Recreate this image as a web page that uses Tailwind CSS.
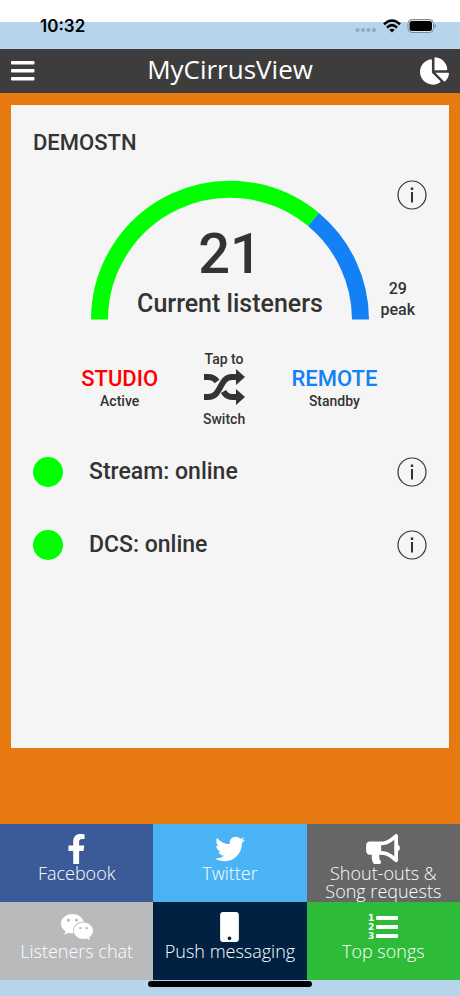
<!DOCTYPE html>
<html lang="en">
<head>
<meta charset="utf-8">
<meta name="viewport" content="width=device-width, initial-scale=1">
<title>MyCirrusView</title>
<script src="https://cdn.jsdelivr.net/npm/@tailwindcss/browser@4"></script>
</head>
<body class="flex min-h-screen flex-col bg-[#b6d4ec] font-['Roboto',sans-serif] text-[#333333]">
  <div class="h-[49px] shrink-0 bg-linear-to-b from-white from-[22px] to-[#b6d4ec] to-[22px]">
    <div class="flex items-center justify-between pt-4 pr-6 pl-10">
      <time class="font-['Inter',sans-serif] text-[17px] leading-5 font-semibold text-black">10:32</time>
      <div class="flex items-center gap-[6px]">
        <svg class="mt-2 h-1 w-[22px]" viewBox="0 0 22 4" fill="#8fa9bf"><circle cx="2.5" cy="2" r="2"/><circle cx="8" cy="2" r="2"/><circle cx="13.500" cy="2" r="2"/><circle cx="19" cy="2" r="2"/></svg>
        <svg class="h-[14px] w-[18px]" viewBox="0 0 18 14" fill="none" stroke="#000" stroke-width="2.600"><path d="M1 5.300Q9-2.300 17 5.300M4 8.600Q9 3.800 14 8.600"/><path d="M6.300 10.800Q9 8.500 11.700 10.800L9 13.500Z" fill="#000" stroke="none"/></svg>
        <svg class="h-[14px] w-[29px]" viewBox="0 0 29 14"><rect x="1" y=".5" width="25.500" height="13" rx="4" fill="#dfe6ec" stroke="#7d8b97"/><rect x="2.500" y="2" width="22.500" height="10" rx="2.500"/><path d="M27.500 5v4q1.500-.5 1.500-2t-1.500-2" fill="#7d8b97"/></svg>
      </div>
    </div>
  </div>

  <header class="flex h-11 shrink-0 items-center justify-between bg-[#3d3d3d] px-[11px] text-white">
    <button type="button" aria-label="Menu" class="w-7">
      <svg class="h-[22px] w-6" viewBox="0 0 24 22" fill="currentColor"><rect y="1" width="23.500" height="3.600" rx="1"/><rect y="9" width="23.500" height="3.600" rx="1"/><rect y="17" width="23.500" height="3.600" rx="1"/></svg>
    </button>
    <h1 class="pb-1 font-['Open_Sans',sans-serif] text-[26px] leading-9 font-normal">MyCirrusView</h1>
    <button type="button" aria-label="Statistics" class="flex w-7 justify-end">
      <svg class="h-7 w-[29px] shrink-0" viewBox="0 0 544 512" fill="currentColor"><path d="M527.79 288H290.5l158.03 158.03c6.04 6.04 15.98 6.53 22.19.68 38.7-36.46 65.32-85.61 73.13-140.86 1.34-9.46-6.51-17.85-16.06-17.85zm-15.83-64.8C503.72 103.74 408.26 8.28 288.8.04 279.68-.59 272 7.1 272 16.24V240h223.77c9.14 0 16.82-7.68 16.19-16.8zM224 288V50.71c0-9.55-8.39-17.4-17.84-16.06C86.99 51.49-4.1 155.6.14 280.37 4.5 408.51 114.83 513.59 243.03 511.98c50.4-.63 96.97-16.87 135.26-44.03 7.9-5.6 8.42-17.23 1.57-24.08L224 288z"/></svg>
    </button>
  </header>

  <main class="flex grow flex-col bg-[#e67a10] px-[11px] pt-3 pb-[76px]">
    <section class="grow bg-[#f5f5f5] px-[22px] pt-[22px]">
      <h2 class="text-[22px] leading-8 font-medium">DEMOSTN</h2>
      <div class="relative mt-[21px]">
        <svg class="mx-auto h-[140px] w-[278px]" viewBox="0 0 278 140" fill="none" stroke-width="17"><path d="M8.500 139.500A130.500 130.500 0 0 1 222.500 39.500" stroke="#00ff00"/><path d="M222.500 39.500A130.500 130.500 0 0 1 269.500 139.500" stroke="#1380f5"/></svg>
        <div class="absolute inset-x-0 top-11 text-center font-medium">
          <p class="text-[56px] leading-[60px]">21</p>
          <p class="text-[25px] leading-10">Current listeners</p>
        </div>
        <p class="absolute right-3 bottom-0 text-center text-[16px] leading-[21px] font-medium">29<br>peak</p>
        <button type="button" aria-label="About listeners" class="absolute top-0 right-0">
          <svg class="size-[30px]" viewBox="0 0 30 30"><circle cx="15" cy="15" r="14" fill="none" stroke="#333" stroke-width="1.200"/><path d="M13.800 7.500h2.400v2.400h-2.400zM14 12h2v10.500h-2z" fill="#333"/></svg>
        </button>
      </div>

      <div class="mt-[29px] grid grid-cols-[44%_9%_47%] items-center text-center font-medium">
        <div>
          <p class="text-[22px] leading-6 text-[#ff0000]">STUDIO</p>
          <p class="text-[14px] leading-5">Active</p>
        </div>
        <button type="button" class="-mx-5 text-[14px] leading-5">
          <span class="block">Tap to</span>
          <svg class="mx-auto h-9 w-[41px]" viewBox="0 0 41 36" fill="none" stroke="#333" stroke-width="6"><path d="M0 28H4C18 28 15 8 28 8H33"/><path d="M0 8H4Q10 8 13 12.500M19.500 22.500Q22.500 28 28 28H33"/><path d="M32 0 41 8 32 16ZM32 20 41 28 32 36Z" fill="#333" stroke="none"/></svg>
          <span class="block pt-1">Switch</span>
        </button>
        <div>
          <p class="text-[22px] leading-6 text-[#1380f5]">REMOTE</p>
          <p class="text-[14px] leading-5">Standby</p>
        </div>
      </div>

      <ul class="mt-7 flex flex-col gap-[43px] text-[23px] leading-[30px] font-medium">
        <li class="flex items-center">
          <span class="size-[30px] rounded-full bg-[#00ff00]"></span>
          <span class="grow pl-[26px]">Stream: online</span>
          <button type="button" aria-label="About stream">
            <svg class="size-[30px]" viewBox="0 0 30 30"><circle cx="15" cy="15" r="14" fill="none" stroke="#333" stroke-width="1.200"/><path d="M13.800 7.500h2.400v2.400h-2.400zM14 12h2v10.500h-2z" fill="#333"/></svg>
          </button>
        </li>
        <li class="flex items-center">
          <span class="size-[30px] rounded-full bg-[#00ff00]"></span>
          <span class="grow pl-[26px]">DCS: online</span>
          <button type="button" aria-label="About DCS">
            <svg class="size-[30px]" viewBox="0 0 30 30"><circle cx="15" cy="15" r="14" fill="none" stroke="#333" stroke-width="1.200"/><path d="M13.800 7.500h2.400v2.400h-2.400zM14 12h2v10.500h-2z" fill="#333"/></svg>
          </button>
        </li>
      </ul>
    </section>
  </main>

  <nav class="grid shrink-0 auto-rows-[78px] grid-cols-3 font-['Open_Sans',sans-serif] text-[18px] leading-[18px] font-light text-white">
    <a href="#facebook" class="flex flex-col items-center bg-[#3b5a98] pt-[10px]">
      <svg class="h-[30px] w-[19px]" viewBox="0 0 320 512" fill="currentColor"><path d="M279.14 288l14.22-92.66h-88.91v-60.13c0-25.35 12.42-50.06 52.24-50.06h40.42V6.26S260.43 0 225.36 0c-73.22 0-121.08 44.38-121.08 124.72v70.62H22.89V288h81.39v224h100.17V288z"/></svg>
      <span>Facebook</span>
    </a>
    <a href="#twitter" class="flex flex-col items-center bg-[#4ab3f5] pt-[10px]">
      <svg class="size-[30px]" viewBox="0 0 512 512" fill="currentColor"><path d="M459.37 151.716c.325 4.548.325 9.097.325 13.645 0 138.72-105.583 298.558-298.558 298.558-59.452 0-114.68-17.219-161.137-47.106 8.447.974 16.568 1.299 25.34 1.299 49.055 0 94.213-16.568 130.274-44.832-46.132-.975-84.792-31.188-98.112-72.772 6.498.974 12.995 1.624 19.818 1.624 9.421 0 18.843-1.3 27.614-3.573-48.081-9.747-84.143-51.98-84.143-102.985v-1.299c13.969 7.797 30.214 12.67 47.431 13.319-28.264-18.843-46.781-51.005-46.781-87.391 0-19.492 5.197-37.36 14.294-52.954 51.655 63.675 129.3 105.258 216.365 109.807-1.624-7.797-2.599-15.918-2.599-24.04 0-57.828 46.782-104.934 104.934-104.934 30.213 0 57.502 12.67 76.67 33.137 23.715-4.548 46.456-13.32 66.599-25.34-7.798 24.366-24.366 44.833-46.132 57.827 21.117-2.273 41.584-8.122 60.426-16.243-14.292 20.791-32.161 39.308-52.628 54.253z"/></svg>
      <span>Twitter</span>
    </a>
    <a href="#shout-outs" class="flex flex-col items-center bg-[#666666] pt-[10px] text-center">
      <svg class="h-[30px] w-[34px]" viewBox="0 0 576 512" fill="currentColor"><path d="M576 240c0-23.63-12.95-44.04-32-55.12V32.01C544 23.26 537.02 0 512 0c-7.12 0-14.19 2.38-19.98 7.02l-85.03 68.03C364.28 109.19 310.66 128 256 128H64c-35.35 0-64 28.65-64 64v96c0 35.35 28.65 64 64 64h33.7c-1.39 10.48-2.18 21.14-2.18 32 0 39.77 9.26 77.35 25.56 110.94 5.19 10.69 16.52 17.06 28.4 17.06h74.28c26.05 0 41.69-29.84 25.9-50.56-16.4-21.52-26.15-48.36-26.15-77.44 0-11.11 1.62-21.79 4.41-32H256c54.66 0 108.28 18.81 150.98 52.95l85.03 68.03a32.023 32.023 0 0 0 19.98 7.02c24.92 0 32-22.78 32-32V295.13C563.05 284.04 576 263.63 576 240zm-96 141.42l-33.05-26.44C392.95 311.78 325.12 288 256 288v-96c69.12 0 136.95-23.78 190.95-66.98L480 98.58v282.84z"/></svg>
      <span>Shout-outs &amp;<br>Song requests</span>
    </a>
    <a href="#chat" class="flex flex-col items-center bg-[#b9babc] pt-[10px]">
      <svg class="h-[30px] w-[34px]" viewBox="0 0 576 512"><path fill="currentColor" d="M385.2 167.6c6.4 0 12.6.3 18.8 1.1C387.4 90.3 303.3 32 207.7 32 100.5 32 13 104.8 13 197.4c0 53.4 29.3 97.5 77.9 131.6l-19.3 58.6 68-34.1c24.4 4.8 43.8 9.7 68.2 9.7 6.2 0 12.1-.3 18.3-.8-4-12.9-6.2-26.6-6.2-40.8-.1-84.9 72.9-154 165.3-154zm-104.5-52.9c14.5 0 24.2 9.7 24.2 24.4 0 14.5-9.7 24.2-24.2 24.2-14.8 0-29.3-9.7-29.3-24.2.1-14.7 14.6-24.4 29.3-24.4zm-136.4 48.6c-14.5 0-29.3-9.7-29.3-24.2 0-14.8 14.8-24.4 29.3-24.4 14.8 0 24.4 9.7 24.4 24.4 0 14.6-9.6 24.2-24.4 24.2zM563 319.4c0-77.9-77.9-141.3-165.4-141.3-92.7 0-165.4 63.4-165.4 141.3S305 460.7 397.6 460.7c19.3 0 38.9-5.1 58.6-9.9l53.4 29.3-14.8-48.6C534 402.1 563 363.2 563 319.4zm-219.1-24.5c-9.7 0-19.3-9.7-19.3-19.6 0-9.7 9.7-19.3 19.3-19.3 14.8 0 24.4 9.7 24.4 19.3 0 10-9.7 19.6-24.4 19.6zm107.1 0c-9.7 0-19.3-9.7-19.3-19.6 0-9.7 9.7-19.3 19.3-19.3 14.5 0 24.4 9.7 24.4 19.3.1 10-9.9 19.6-24.4 19.6z"/></svg>
      <span>Listeners chat</span>
    </a>
    <a href="#push" class="flex flex-col items-center bg-[#002142] pt-[10px]">
      <svg class="h-[30px] w-[19px]" viewBox="0 0 320 512" fill="currentColor"><path d="M272 0H48C21.5 0 0 21.5 0 48v416c0 26.5 21.5 48 48 48h224c26.5 0 48-21.5 48-48V48c0-26.5-21.5-48-48-48zM160 480c-17.7 0-32-14.3-32-32s14.3-32 32-32 32 14.3 32 32-14.3 32-32 32z"/></svg>
      <span>Push messaging</span>
    </a>
    <a href="#songs" class="flex flex-col items-center bg-[#2dbb38] pt-[10px]">
      <svg class="size-[30px]" viewBox="0 0 30 30" fill="currentColor"><g font-family="DejaVu Sans" font-weight="bold" font-size="9"><text x="0" y="9">1</text><text x="0" y="18">2</text><text x="0" y="27">3</text></g><rect x="8" y="4" width="22" height="4" rx="1"/><rect x="8" y="13" width="22" height="4" rx="1"/><rect x="8" y="22" width="22" height="4" rx="1"/></svg>
      <span>Top songs</span>
    </a>
  </nav>
  <footer class="flex h-4 shrink-0 items-start justify-center">
    <div class="mt-px h-[6px] w-[164px] rounded-full bg-black"></div>
  </footer>
</body>
</html>
